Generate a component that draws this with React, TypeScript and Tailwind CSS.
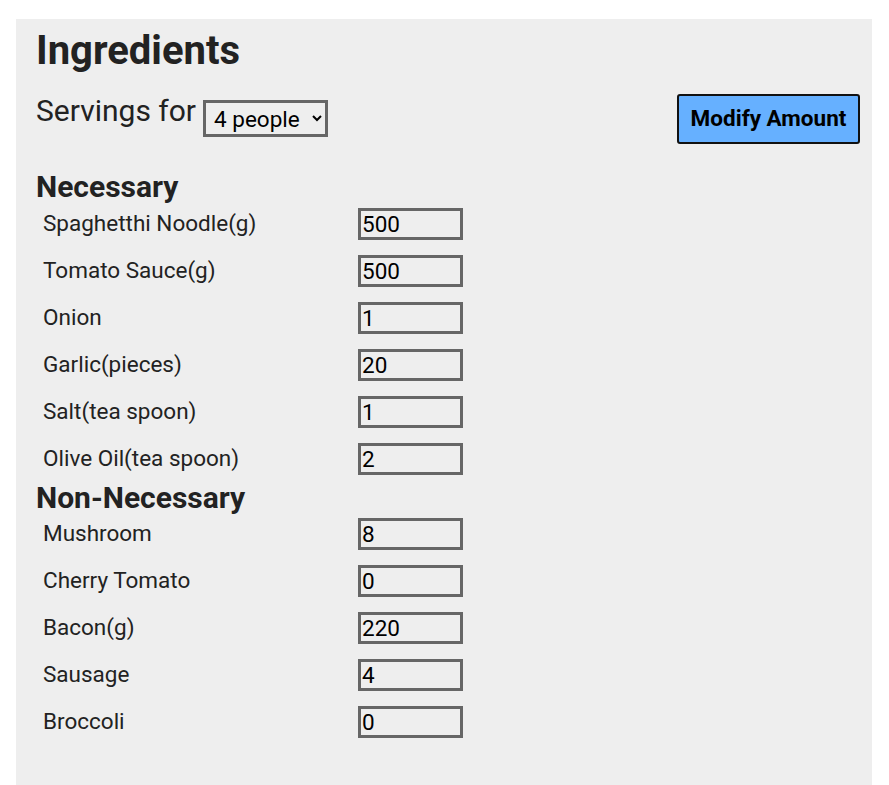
import { useState } from 'react';

type Item = { name: string; amount: string };

const necessary: Item[] = [
  { name: 'Spaghetthi Noodle(g)', amount: '500' },
  { name: 'Tomato Sauce(g)', amount: '500' },
  { name: 'Onion', amount: '1' },
  { name: 'Garlic(pieces)', amount: '20' },
  { name: 'Salt(tea spoon)', amount: '1' },
  { name: 'Olive Oil(tea spoon)', amount: '2' },
];

const optional: Item[] = [
  { name: 'Mushroom', amount: '8' },
  { name: 'Cherry Tomato', amount: '0' },
  { name: 'Bacon(g)', amount: '220' },
  { name: 'Sausage', amount: '4' },
  { name: 'Broccoli', amount: '0' },
];

const Row = ({ item }: { item: Item }) => {
  const [val, setVal] = useState(item.amount);
  return (
    <div className="flex items-start h-[47px]">
      <span className="w-[322px] pl-[7px] pt-[1px] text-[22.5px] leading-[28px] text-[#222]">{item.name}</span>
      <input
        value={val}
        onChange={e => setVal(e.target.value)}
        className="w-[105px] h-[32px] border-[3px] border-[#666] bg-transparent pl-[1px] pr-[2px] text-[22.5px] leading-[26px] text-black outline-none"
      />
    </div>
  );
};

export default function App() {
  const [servings, setServings] = useState('4');
  return (
    <div className="min-h-screen bg-white pt-[19px] pl-[16px] pr-[17px] font-['Roboto',sans-serif]">
      <div className="bg-[#eeeeee] pl-[20px] pr-[12px] pt-[8px] pb-[40px]">
        <h1 className="text-[40px] leading-[48px] font-bold text-[#222]">Ingredients</h1>
        <div className="flex items-start justify-between mt-[19px]">
          <div className="flex items-start">
            <span className="text-[30px] leading-[34px] text-[#222]">Servings for</span>
            <select
              value={servings}
              onChange={e => setServings(e.target.value)}
              className="ml-[7px] mt-[6px] w-[125px] h-[37px] border-[3px] border-[#666] bg-transparent pl-[4px] text-[22.5px] leading-[28px] text-black outline-none"
            >
              <option value="1">1 person</option>
              <option value="2">2 people</option>
              <option value="4">4 people</option>
              <option value="6">6 people</option>
            </select>
          </div>
          <button className="w-[183px] h-[50px] rounded-[3px] border-2 border-[#111] bg-[#66b0ff] text-[22.5px] font-bold text-black">
            Modify Amount
          </button>
        </div>
        <h2 className="mt-[25px] mb-[3px] text-[30px] leading-[36px] font-bold text-[#222]">Necessary</h2>
        {necessary.map(it => <Row key={it.name} item={it} />)}
        <h2 className="-mt-[10px] mb-[2px] text-[30px] leading-[36px] font-bold text-[#222]">Non-Necessary</h2>
        {optional.map(it => <Row key={it.name} item={it} />)}
      </div>
    </div>
  );
}
